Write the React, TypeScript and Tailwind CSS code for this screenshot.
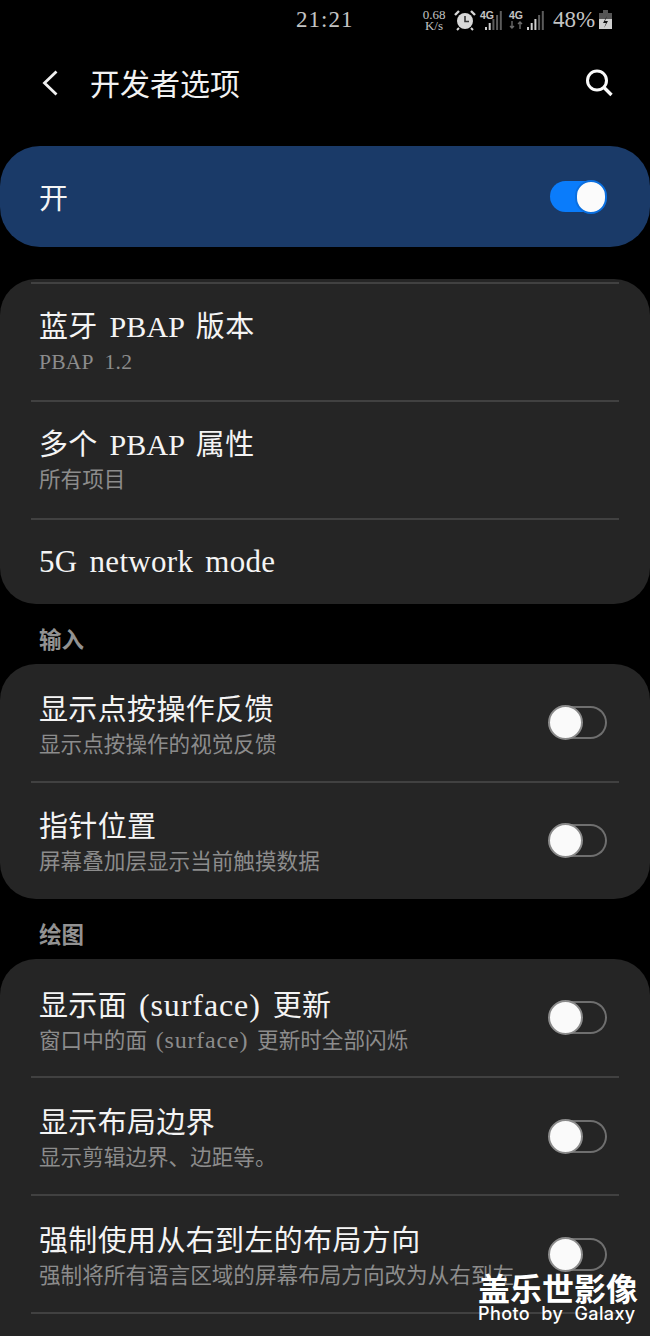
import React from "react";

const serif = "font-['Liberation_Serif','Noto_Sans_CJK_SC',serif]";

function Toggle({ on = false }: { on?: boolean }) {
  if (on) {
    return (
      <div className="w-[57px] h-[34px] shrink-0 flex items-center">
        <div className="w-[41px] h-[31px] rounded-l-full bg-[#0a7cfb]" />
        <div className="-ml-[16px] w-[32px] h-[34px] rounded-full bg-[#fbfbfb] border-2 border-[#0a6fe0] relative" />
      </div>
    );
  }
  return (
    <div className="w-[59px] h-[35px] -mt-[2px] shrink-0 flex items-center">
      <div className="w-[35px] h-[35px] shrink-0 rounded-full bg-[#fafafa] border-2 border-[#8a8a8a] relative z-10" />
      <div className="-ml-[18px] w-[42px] h-[33px] shrink-0 rounded-r-full border-2 border-l-0 border-[#6f6f6f]" />
    </div>
  );
}

function Row({
  title,
  sub,
  toggle,
  divider,
  h = "h-[118px]",
}: {
  title: React.ReactNode;
  sub?: React.ReactNode;
  toggle?: boolean;
  divider?: boolean;
  h?: string;
}) {
  return (
    <div className={`relative ${h} flex items-center pl-[39px] pr-[43px]`}>
      <div className={`flex-1 min-w-0 overflow-hidden ${toggle ? "pt-[4px] mr-[34px]" : ""}`}>
        <div className="h-[38px] text-[29px] leading-[38px] tracking-[0.35px] text-[#f4f4f4] whitespace-nowrap">{title}</div>
        {sub && <div className="h-[32px] text-[21.6px] leading-[32px] text-[#8c8c8c] whitespace-nowrap">{sub}</div>}
      </div>
      {toggle && <Toggle />}
      {divider && <div className="absolute left-[31px] right-[31px] bottom-0 h-[2px] bg-[#414141]" />}
    </div>
  );
}

function Signal({ level }: { level: number }) {
  const bars = [3, 7, 11, 15, 19];
  return (
    <svg width="18" height="19" viewBox="0 0 18 19" className="block">
      {bars.map((b, i) => (
        <rect key={i} x={i * 3.7} y={19 - b} width="2" height={b} fill={i < level ? "#cfcfcf" : "#5c5c5c"} />
      ))}
    </svg>
  );
}

function Net({ level, arrows }: { level: number; arrows?: boolean }) {
  return (
    <div className="relative flex items-end h-[20px]">
      <div className="absolute left-0 top-0 font-['Liberation_Sans',sans-serif] font-bold text-[10.5px] leading-[11px] text-[#c4c4c4]">4G</div>
      {arrows && (
        <svg className="mr-[3px] mb-[1px]" width="15" height="8" viewBox="0 0 15 8">
          <path d="M3 0v7M1 5l2 2 2-2M11 8V1M9 3l2-2 2 2" stroke="#6a6a6a" strokeWidth="1.4" fill="none" />
        </svg>
      )}
      <div className={arrows ? "" : "ml-[5px]"}>
        <Signal level={level} />
      </div>
    </div>
  );
}

function Heading({ children }: { children: React.ReactNode }) {
  return <div className="pl-[39px] pt-[22px] h-[60px] text-[22.5px] leading-[30px] font-semibold text-[#929292]">{children}</div>;
}

export default function App() {
  return (
    <div className={`relative w-[650px] h-[1336px] overflow-hidden bg-black ${serif}`}>
      {/* Status bar */}
      <div className="h-[42px] pl-[296px] pb-[2px] flex items-center text-[#c4c4c4]">
        <div className="w-[56px] text-[23px] leading-[28px] tracking-[1px] whitespace-nowrap">21:21</div>
        <div className="ml-[68px] w-[28px] text-center text-[13px] leading-[11px]">
          <div>0.68</div>
          <div>K/s</div>
        </div>
        <svg className="ml-[6px]" width="22" height="22" viewBox="0 0 22 22">
          <circle cx="11" cy="12" r="8" fill="#d8d8d8" />
          <path d="M11 7v5.5h4" stroke="#333" strokeWidth="1.6" fill="none" />
          <path d="M1 6l4-4M21 6l-4-4" stroke="#d8d8d8" strokeWidth="2.4" />
          <path d="M5 19l-2 2M17 19l2 2" stroke="#d8d8d8" strokeWidth="2" />
        </svg>
        <div className="ml-[4px] w-[23px]">
          <Net level={2} />
        </div>
        <div className="ml-[6px] w-[37px]">
          <Net level={3} arrows />
        </div>
        <div className="ml-[7px] w-[42px] text-[23px] leading-[28px] whitespace-nowrap">48%</div>
        <svg className="ml-[4px]" width="13" height="20" viewBox="0 0 13 20">
          <rect x="4" y="0" width="5" height="3" fill="#555" />
          <rect x="0" y="3" width="13" height="8" fill="#555" />
          <rect x="0" y="9" width="13" height="10" fill="#cfcfcf" />
          <path d="M8 6L4 13h3l-2 5 4-7H6z" fill="#111" />
        </svg>
      </div>

      {/* Header */}
      <div className="h-[82px] flex items-center pl-[41px] pr-[36px]">
        <svg width="18" height="28" viewBox="0 0 18 28">
          <path d="M15.5 2.5L3.5 14l12 11.5" stroke="#f0f0f0" strokeWidth="2.8" fill="none" />
        </svg>
        <div className="ml-[31px] pt-[3px] flex-1 text-[30px] leading-[40px] text-[#f2f2f2]">开发者选项</div>
        <svg width="30" height="30" viewBox="0 0 30 30">
          <circle cx="13" cy="12.5" r="9.5" stroke="#fafafa" strokeWidth="3" fill="none" />
          <path d="M20 19.5l7.5 7.5" stroke="#fafafa" strokeWidth="3.4" />
        </svg>
      </div>

      {/* Master switch */}
      <div className="mt-[22px] h-[101px] rounded-[40px] bg-[#1a3a68] flex items-center justify-between pl-[39px] pr-[43px]">
        <div className="pt-[4px] text-[29px] leading-[38px] text-[#f4f4f4]">开</div>
        <Toggle on />
      </div>

      {/* Card 1 */}
      <div className="mt-[32px] rounded-[36px] bg-[#252525] overflow-hidden">
        <div className="mx-[31px] mt-[3px] h-[2px] bg-[#414141]" />
        <Row
          title={<>蓝牙<span className="mx-[4px] text-[30px] tracking-[0.2px]"> PBAP </span>版本</>}
          sub={<span className="tracking-[0.2px] [word-spacing:6px]">PBAP 1.2</span>}
          divider
        />
        <Row title={<>多个<span className="mx-[4px] text-[30px] tracking-[0.2px]"> PBAP </span>属性</>} sub="所有项目" divider />
        <Row title={<span className="text-[31px] tracking-[0.3px] [word-spacing:4px]">5G network mode</span>} h="h-[84px]" />
      </div>

      <Heading>输入</Heading>

      {/* Card 2 */}
      <div className="rounded-[36px] bg-[#252525] overflow-hidden">
        <Row title="显示点按操作反馈" sub="显示点按操作的视觉反馈" toggle divider h="h-[119px]" />
        <Row title="指针位置" sub="屏幕叠加层显示当前触摸数据" toggle h="h-[116px]" />
      </div>

      <Heading>绘图</Heading>

      {/* Card 3 */}
      <div className="rounded-t-[36px] bg-[#252525] h-[400px]">
        <Row
          title={<>显示面<span className="mx-[3px] text-[32px] tracking-[0.9px]"> (surface) </span>更新</>}
          sub={<>窗口中的面<span className="mx-[2px] text-[24px] tracking-[0.8px]"> (surface) </span>更新时全部闪烁</>}
          toggle
          divider
          h="h-[119px]"
        />
        <Row title="显示布局边界" sub="显示剪辑边界、边距等。" toggle divider />
        <Row title="强制使用从右到左的布局方向" sub="强制将所有语言区域的屏幕布局方向改为从右到左。" toggle divider />
      </div>

      {/* Watermark */}
      <div className="absolute left-[478px] top-[1269px] w-[162px] font-['Noto_Sans_CJK_SC',sans-serif] text-white">
        <div className="text-[32px] leading-[36px] font-bold whitespace-nowrap">盖乐世影像</div>
        <div className="font-['Inter',sans-serif] font-medium text-[18px] leading-[18px] tracking-[0.4px] [word-spacing:6px] whitespace-nowrap">Photo by Galaxy</div>
      </div>
    </div>
  );
}
